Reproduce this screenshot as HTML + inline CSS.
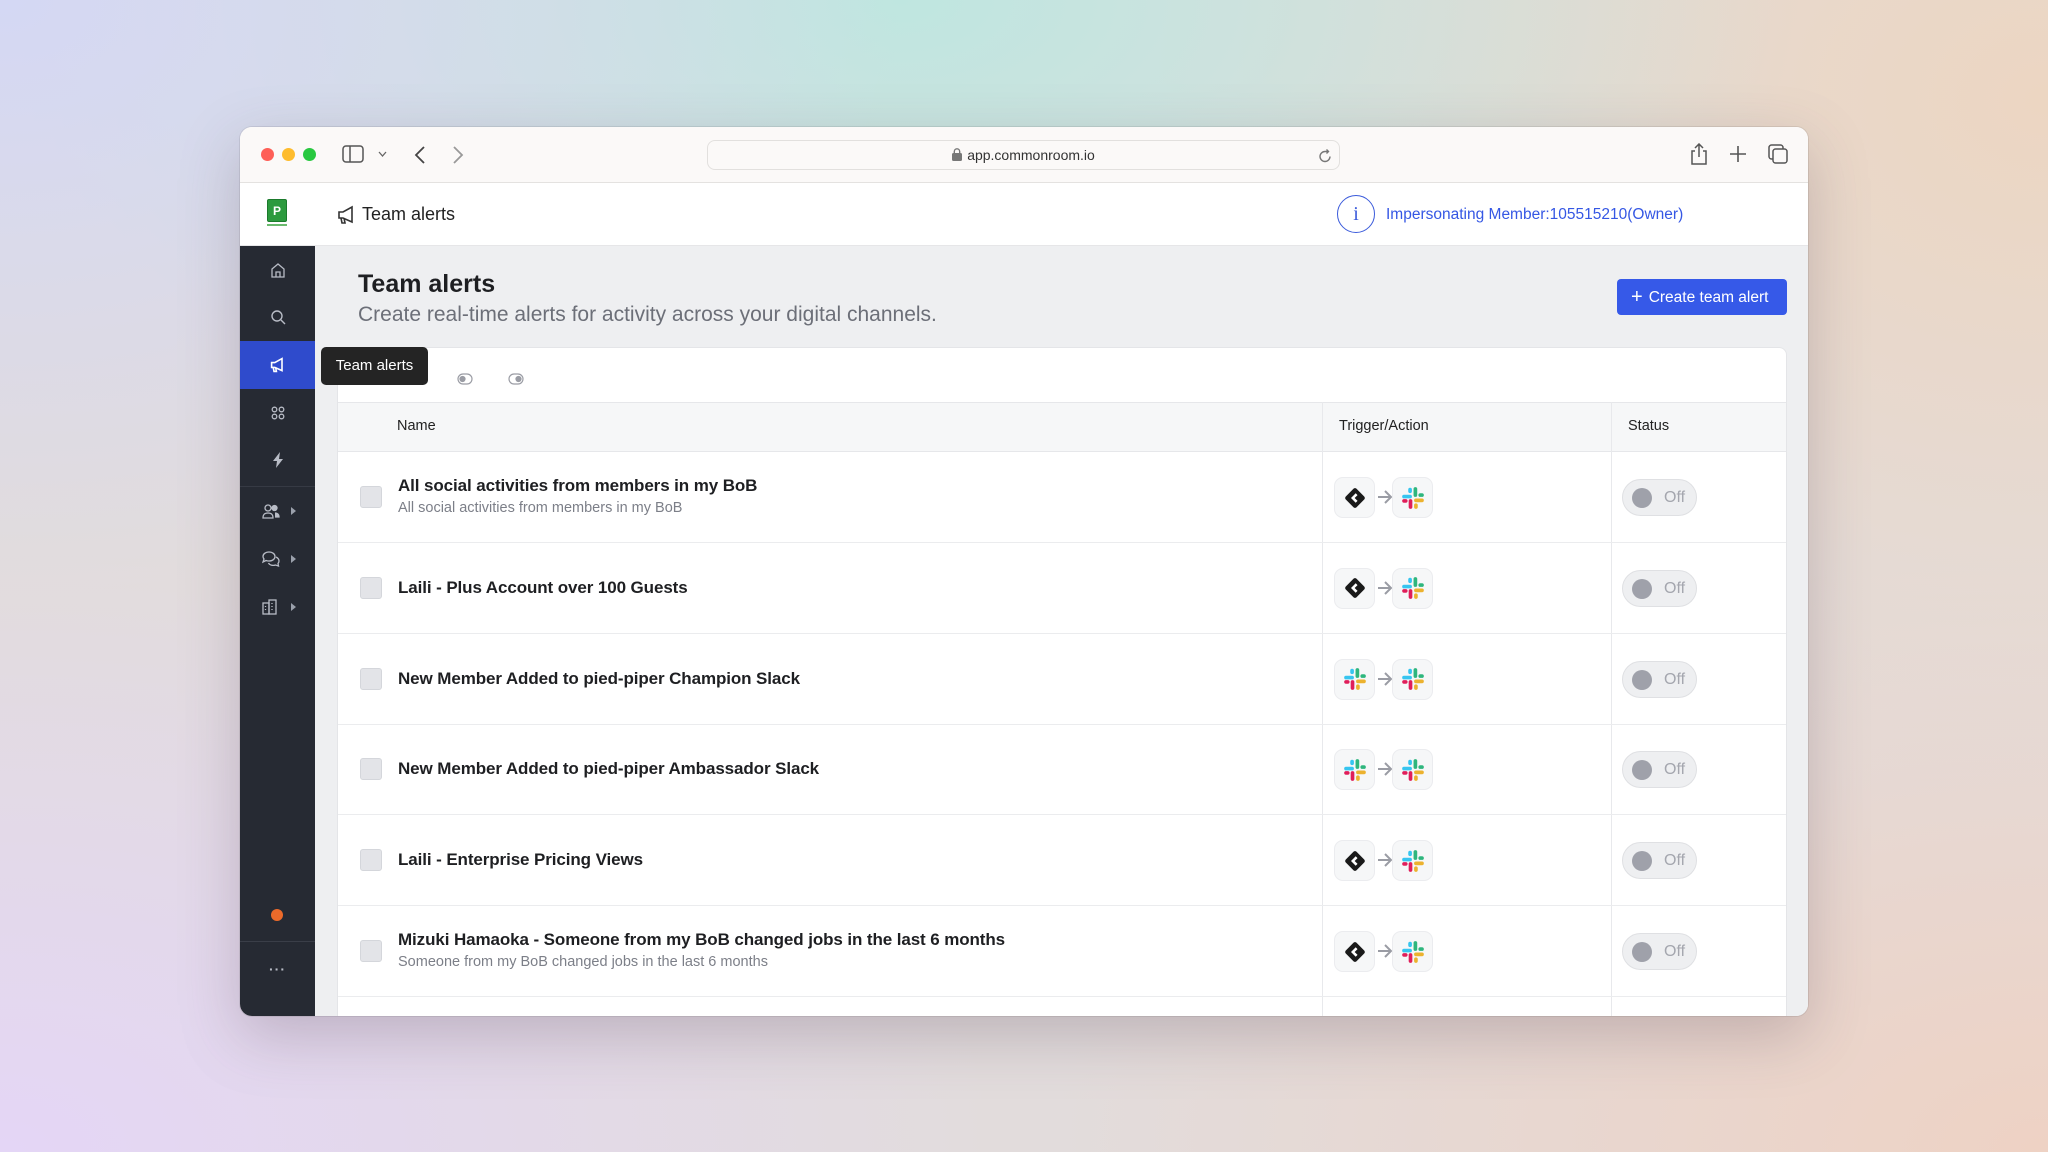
<!DOCTYPE html>
<html><head><meta charset="utf-8">
<style>
*{box-sizing:border-box;margin:0;padding:0}
body{width:2048px;height:1152px;overflow:hidden;font-family:"Liberation Sans",sans-serif;position:relative;
background:
radial-gradient(ellipse 900px 600px at 0px 0px,#d4d8f4 0%,rgba(212,216,244,0) 100%),
radial-gradient(ellipse 900px 500px at 900px 0px,#bfe6e0 0%,rgba(191,230,224,0) 100%),
radial-gradient(ellipse 900px 700px at 2048px 100px,#ecd6c2 0%,rgba(236,214,194,0) 100%),
radial-gradient(ellipse 1000px 600px at 0px 1152px,#e4d6f6 0%,rgba(228,214,246,0) 100%),
radial-gradient(ellipse 1000px 600px at 2048px 1152px,#eed2c4 0%,rgba(238,210,196,0) 100%),
#e2dcdc;}
.win{position:absolute;left:240px;top:127px;width:1568px;height:889px;border-radius:12px;overflow:hidden;background:#fff;box-shadow:0 20px 60px rgba(80,60,80,.25),0 0 0 1px rgba(0,0,0,.08)}
.tb{position:absolute;left:0;top:0;width:100%;height:56px;background:#fbf9f8;border-bottom:1px solid #e4e2e0}
.dot{position:absolute;top:21px;width:13px;height:13px;border-radius:50%}
.addr{position:absolute;left:467px;top:13px;width:633px;height:30px;border:1px solid #e2e0de;border-radius:8px;background:#fbf9f8;font-size:14px;color:#333;text-align:center;line-height:29px}
.hdr{position:absolute;left:0;top:56px;width:100%;height:63px;background:#fff;border-bottom:1px solid #e6e6e8}
.side{position:absolute;left:0;top:119px;width:75px;height:770px;background:#262a33}
.si{position:absolute;left:0;width:75px;height:47px;display:flex;align-items:center;justify-content:center}
.main{position:absolute;left:75px;top:119px;width:1493px;height:770px;background:#eeeff1}
.card{position:absolute;left:22px;top:101px;width:1450px;height:680px;background:#fff;border:1px solid #e4e5e8;border-radius:8px}
.th{position:absolute;left:0;top:54px;width:100%;height:50px;background:#f6f7f8;border-top:1px solid #e6e7ea;border-bottom:1px solid #e6e7ea;font-size:14.5px;color:#222}
.row{position:absolute;left:0;width:100%;height:91px;border-bottom:1px solid #ebecee}
.cb{position:absolute;left:22px;width:22px;height:22px;border:1px solid #d4d6db;background:#e3e4e8;border-radius:3px}
.nm{position:absolute;left:60px;font-size:17px;font-weight:bold;color:#1e1f22;letter-spacing:-.1px}
.sub{position:absolute;left:60px;font-size:14.5px;color:#7c7f88}
.ib{position:absolute;width:41px;height:41px;border:1px solid #ebecef;background:#f6f7f8;border-radius:9px;display:flex;align-items:center;justify-content:center}
.arr{position:absolute;left:1039px}
.tg{position:absolute;left:1284px;width:75px;height:37px;border-radius:19px;background:#eeeff1;border:1px solid #dfe0e3}
.tg i{position:absolute;left:9px;top:8px;width:20px;height:20px;border-radius:50%;background:#9fa1aa}
.tg span{position:absolute;left:41px;top:9px;font-size:16px;color:#a4a6ae}
.vl{position:absolute;top:54px;width:1px;height:626px;background:#e8e9ec}
</style></head><body>
<div class="win">
 <div class="tb">
  <div class="dot" style="left:21px;background:#fe5f57"></div>
  <div class="dot" style="left:42px;background:#febc2e"></div>
  <div class="dot" style="left:63px;background:#28c840"></div>
  <svg style="position:absolute;left:102px;top:18px" width="22" height="18" viewBox="0 0 22 18" fill="none" stroke="#555" stroke-width="1.5"><rect x="1" y="1" width="20" height="16" rx="3"/><line x1="8" y1="1" x2="8" y2="17"/></svg>
  <svg style="position:absolute;left:138px;top:24px" width="9" height="6" viewBox="0 0 9 6" fill="none" stroke="#666" stroke-width="1.3"><path d="M1 1l3.5 4 3.5-4"/></svg>
  <svg style="position:absolute;left:174px;top:18px" width="12" height="20" viewBox="0 0 12 20" fill="none" stroke="#444" stroke-width="1.8"><path d="M10 2L2 10l8 8"/></svg>
  <svg style="position:absolute;left:212px;top:18px" width="12" height="20" viewBox="0 0 12 20" fill="none" stroke="#999" stroke-width="1.8"><path d="M2 2l8 8-8 8"/></svg>
  <div class="addr"><svg width="10" height="13" viewBox="0 0 10 13" style="vertical-align:-1px;margin-right:5px"><rect x="0" y="5" width="10" height="8" rx="1.5" fill="#777"/><path d="M2.3 5.5V3.5a2.7 2.7 0 015.4 0v2" fill="none" stroke="#777" stroke-width="1.4"/></svg>app.commonroom.io
   <svg style="position:absolute;right:6px;top:7px" width="16" height="16" viewBox="0 0 16 16" fill="none" stroke="#777" stroke-width="1.4"><path d="M13 8.5A5 5 0 118 3.5h3"/><path d="M9.5 1.5L11.5 3.5 9.5 5.5"/></svg></div>
  <svg style="position:absolute;left:1449px;top:16px" width="20" height="22" viewBox="0 0 20 22" fill="none" stroke="#555" stroke-width="1.5"><path d="M6 8H3v13h14V8h-3"/><path d="M10 14V1M6 5l4-4 4 4"/></svg>
  <svg style="position:absolute;left:1489px;top:18px" width="18" height="18" viewBox="0 0 18 18" stroke="#555" stroke-width="1.6"><path d="M9 1v16M1 9h16"/></svg>
  <svg style="position:absolute;left:1528px;top:17px" width="20" height="20" viewBox="0 0 20 20" fill="none" stroke="#555" stroke-width="1.5"><rect x="5" y="5" width="14" height="14" rx="2.5"/><path d="M15 5V3.5A2.5 2.5 0 0012.5 1h-9A2.5 2.5 0 001 3.5v9A2.5 2.5 0 003.5 15H5"/></svg>
 </div>
 <div class="hdr">
  <div style="position:absolute;left:27px;top:16px;width:20px;height:23px;background:#2c9a3e;border:1px solid #1b7a2c;border-radius:2px;color:#fff;font-size:12px;font-weight:bold;text-align:center;line-height:22px">P</div>
  <div style="position:absolute;left:27px;top:41px;width:20px;height:2px;background:#6aba6e"></div>
  <svg style="position:absolute;left:97px;top:22px" width="20" height="20" viewBox="0 0 20 20" fill="none" stroke="#333" stroke-width="1.6"><path d="M2 7h4l9-5v15l-9-4H2z"/><path d="M4 13l1 5h3l-1-5"/></svg>
  <div style="position:absolute;left:122px;top:21px;font-size:18px;color:#222">Team alerts</div>
  <div style="position:absolute;left:1097px;top:12px;width:38px;height:38px;border:1.5px solid #3b5bdb;border-radius:50%;color:#3b5bdb;font-family:'Liberation Serif',serif;font-size:20px;text-align:center;line-height:36px">i</div>
  <div style="position:absolute;left:1146px;top:23px;font-size:15.5px;color:#3557e4">Impersonating Member:105515210(Owner)</div>
 </div>
 <div class="side">
  <div class="si" style="top:0"><svg width="16" height="16" viewBox="0 0 16 16" fill="none" stroke="#b8bcc6" stroke-width="1.3"><path d="M2 7l6-5 6 5v8H2z"/><path d="M6 15v-5h4v5"/></svg></div>
  <div class="si" style="top:47px"><svg width="16" height="16" viewBox="0 0 16 16" fill="none" stroke="#b8bcc6" stroke-width="1.4"><circle cx="7" cy="7" r="5"/><path d="M11 11l4 4"/></svg></div>
  <div class="si" style="top:95px;height:48px;background:#2f4bcc"><svg width="16" height="16" viewBox="0 0 20 20" fill="none" stroke="#fff" stroke-width="2"><path d="M2 7h4l9-5v15l-9-4H2z"/><path d="M4 13l1 5h3l-1-5"/></svg></div>
  <div class="si" style="top:143px"><svg width="14" height="14" viewBox="0 0 14 14" fill="none" stroke="#b8bcc6" stroke-width="1.3"><circle cx="3.5" cy="3.5" r="2.3"/><circle cx="10.5" cy="3.5" r="2.3"/><circle cx="3.5" cy="10.5" r="2.3"/><circle cx="10.5" cy="10.5" r="2.3"/></svg></div>
  <div class="si" style="top:190px"><svg width="12" height="16" viewBox="0 0 12 16"><path d="M8 0L1 9h4l-1 7 7-9H7z" fill="#b8bcc6"/></svg></div>
  <div style="position:absolute;top:240px;left:0;width:75px;height:1px;background:#363a44"></div>
  <div class="si" style="top:241px;justify-content:flex-start;padding-left:22px"><svg width="18" height="16" viewBox="0 0 18 16" fill="none" stroke="#b8bcc6" stroke-width="1.3"><circle cx="6" cy="5" r="3"/><path d="M1 15c0-4 2-5 5-5s5 1 5 5z"/><circle cx="12.5" cy="5" r="2.5" fill="#b8bcc6"/><path d="M13 10c2 0 4 1 4 4h-4" fill="#b8bcc6"/></svg><svg style="margin-left:11px" width="5" height="8" viewBox="0 0 5 8"><path d="M0 0l5 4-5 4z" fill="#9aa0ab"/></svg></div>
  <div class="si" style="top:289px;justify-content:flex-start;padding-left:22px"><svg width="18" height="16" viewBox="0 0 18 16" fill="none" stroke="#b8bcc6" stroke-width="1.3"><path d="M7 1c3.5 0 6 2 6 4.5S10.5 10 7 10c-1 0-2 0-3-.5L1 11l1-3C1 7 1 6 1 5.5 1 3 3.5 1 7 1z"/><path d="M14 6c2 1 3 2 3 4 0 1-.5 2-1 2.5l.5 2.5-3-1c-3 1-6 0-7-2"/></svg><svg style="margin-left:11px" width="5" height="8" viewBox="0 0 5 8"><path d="M0 0l5 4-5 4z" fill="#9aa0ab"/></svg></div>
  <div class="si" style="top:337px;justify-content:flex-start;padding-left:22px"><svg width="16" height="16" viewBox="0 0 16 16" fill="none" stroke="#b8bcc6" stroke-width="1.3"><rect x="1" y="4" width="6" height="11"/><rect x="7" y="1" width="7" height="14"/><path d="M3.5 7v1M3.5 10v1M10 4v1M10 7v1M10 10v1"/></svg><svg style="margin-left:13px" width="5" height="8" viewBox="0 0 5 8"><path d="M0 0l5 4-5 4z" fill="#9aa0ab"/></svg></div>
  <div style="position:absolute;left:31px;top:663px;width:12px;height:12px;border-radius:50%;background:#ec6a2a"></div>
  <div style="position:absolute;left:0;top:695px;width:75px;height:1px;background:#3a3e48"></div>
  <div style="position:absolute;left:0;top:715px;width:75px;text-align:center;color:#b8bcc6;font-size:14px;letter-spacing:1px;font-weight:bold">···</div>
 </div>
 <div class="main">
  <div style="position:absolute;left:43px;top:24px;font-size:25px;font-weight:bold;color:#1e1f22">Team alerts</div>
  <div style="position:absolute;left:43px;top:57px;font-size:21px;color:#6c6f78">Create real-time alerts for activity across your digital channels.</div>
  <div style="position:absolute;left:1302px;top:33px;width:170px;height:36px;background:#3659e8;border-radius:4px;color:#fff;font-size:15.5px;line-height:36px;padding-left:14px"><span style="font-size:20px;vertical-align:-1px;margin-right:6px">+</span>Create team alert</div>
  <div class="card">
   <svg style="position:absolute;left:119px;top:24px" width="16" height="14" viewBox="0 0 16 14" fill="none" stroke="#9a9ca4" stroke-width="1.2"><rect x="1" y="2" width="14" height="10" rx="5"/><circle cx="5.5" cy="7" r="2.5" fill="#9a9ca4"/></svg>
   <svg style="position:absolute;left:170px;top:24px" width="16" height="14" viewBox="0 0 16 14" fill="none" stroke="#9a9ca4" stroke-width="1.2"><rect x="1" y="2" width="14" height="10" rx="5"/><circle cx="10.5" cy="7" r="2.5" fill="#9a9ca4"/></svg>
   <div class="th"><span style="position:absolute;left:59px;top:15px">Name</span><span style="position:absolute;left:1001px;top:15px">Trigger/Action</span><span style="position:absolute;left:1290px;top:15px">Status</span></div>
   <div class="vl" style="left:984px"></div><div class="vl" style="left:1273px"></div>
   <div id="rows"></div>
  </div>
 </div>
 <div style="position:absolute;left:81px;top:220px;width:107px;height:38px;background:#242424;border-radius:5px;color:#fff;font-size:15px;line-height:38px;text-align:center">Team alerts</div>
</div>
<svg width="0" height="0" style="position:absolute"><defs>
<g id="sl"><rect x="2" y="9" width="9" height="3.4" rx="1.7" fill="#36c5f0"/><rect x="7.6" y="2.5" width="3.4" height="5" rx="1.7" fill="#36c5f0"/><rect x="12.5" y="2" width="3.4" height="9" rx="1.7" fill="#2eb67d"/><rect x="17" y="7.6" width="5" height="3.4" rx="1.7" fill="#2eb67d"/><rect x="13" y="12.5" width="9" height="3.4" rx="1.7" fill="#ecb22e"/><rect x="13" y="17" width="3.4" height="5" rx="1.7" fill="#ecb22e"/><rect x="8" y="13" width="3.4" height="9" rx="1.7" fill="#e01e5a"/><rect x="2" y="13" width="5" height="3.4" rx="1.7" fill="#e01e5a"/></g>
<g id="dm"><rect x="5" y="5" width="14" height="14" rx="2" transform="rotate(45 12 12)" fill="#1a1a1a"/><path d="M13.5 8.5L10 12l3.5 3.5" fill="none" stroke="#fff" stroke-width="2.4"/></g>
</defs></svg>
<script>
var R=[["All social activities from members in my BoB","All social activities from members in my BoB",0],
["Laili - Plus Account over 100 Guests","",0],
["New Member Added to pied-piper Champion Slack","",1],
["New Member Added to pied-piper Ambassador Slack","",1],
["Laili - Enterprise Pricing Views","",0],
["Mizuki Hamaoka - Someone from my BoB changed jobs in the last 6 months","Someone from my BoB changed jobs in the last 6 months",0]];
var h="";
R.forEach(function(r,i){var t=104+i*90.8;
h+='<div class="row" style="top:'+t+'px"><div class="cb" style="top:34px"></div>';
if(r[1]){h+='<div class="nm" style="top:24px">'+r[0]+'</div><div class="sub" style="top:48px">'+r[1]+'</div>';}
else h+='<div class="nm" style="top:35px">'+r[0]+'</div>';
h+='<div class="ib" style="left:996px;top:25px"><svg width="26" height="26" viewBox="0 0 24 24"><use href="#'+(r[2]?'sl':'dm')+'"/></svg></div>';
h+='<svg class="arr" style="top:38px" width="16" height="14" viewBox="0 0 16 14" fill="none" stroke="#9a9ca4" stroke-width="2"><path d="M1 7h13M8 1l6 6-6 6"/></svg>';
h+='<div class="ib" style="left:1054px;top:25px"><svg width="26" height="26" viewBox="0 0 24 24"><use href="#sl"/></svg></div>';
h+='<div class="tg" style="top:27px"><i></i><span>Off</span></div></div>';});
document.getElementById("rows").innerHTML=h;
</script>
</body></html>
